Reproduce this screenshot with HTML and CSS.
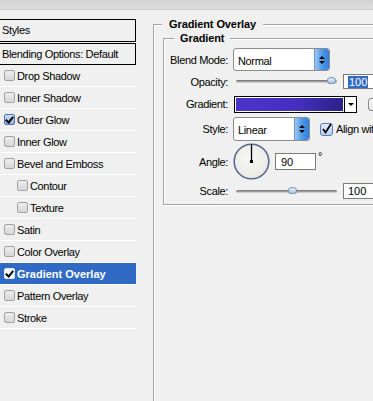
FILE: index.html
```html
<!DOCTYPE html>
<html>
<head>
<meta charset="utf-8">
<link rel="stylesheet" href="styles.css">
</head>
<body>
<div class="topbar"></div>
<div class="main">
  <div class="side">
    <div class="hdr hdr-styles">Styles</div>
    <div class="hdr hdr-blend">Blending Options: Default</div>
    <ul class="list">
      <li class="item"><span class="cb"></span>Drop Shadow</li>
      <li class="item"><span class="cb"></span>Inner Shadow</li>
      <li class="item"><span class="cb cb-on"></span>Outer Glow</li>
      <li class="item"><span class="cb"></span>Inner Glow</li>
      <li class="item"><span class="cb"></span>Bevel and Emboss</li>
      <li class="item sub"><span class="cb"></span>Contour</li>
      <li class="item sub"><span class="cb"></span>Texture</li>
      <li class="item"><span class="cb"></span>Satin</li>
      <li class="item"><span class="cb"></span>Color Overlay</li>
      <li class="item sel"><span class="cb cb-sel"></span>Gradient Overlay</li>
      <li class="item"><span class="cb"></span>Pattern Overlay</li>
      <li class="item"><span class="cb"></span>Stroke</li>
    </ul>
  </div>
  <div class="content">
    <fieldset class="group outer">
      <legend class="title title-outer">Gradient Overlay</legend>
      <fieldset class="group inner">
        <legend class="title title-inner">Gradient</legend>
        <div class="form">
          <div class="row row-blend">
            <label class="lbl">Blend Mode:</label>
            <div class="select sel-blend"><span class="sel-text">Normal</span><span class="spin"><i class="up"></i><i class="dn"></i></span></div>
          </div>
          <div class="row row-opacity">
            <label class="lbl">Opacity:</label>
            <div class="slider"><span class="thumb" style="left:96px"></span></div>
            <div class="num num-op"><span class="hl">100</span></div>
          </div>
          <div class="row row-grad">
            <label class="lbl">Gradient:</label>
            <div class="grad"><span class="grad-fill"></span></div>
            <div class="grad-arrow"><i class="tri"></i></div>
            <span class="cb2 rev"></span>
          </div>
          <div class="row row-style">
            <label class="lbl">Style:</label>
            <div class="select sel-style"><span class="sel-text">Linear</span><span class="spin"><i class="up"></i><i class="dn"></i></span></div>
            <span class="cb2 cb2-on"><svg width="13" height="13" viewBox="0 0 13 13"><path d="M3 6 L5.5 9.5 L11 1" fill="none" stroke="#000" stroke-width="1.8"/></svg></span>
            <span class="align">Align with</span>
          </div>
          <div class="row row-angle">
            <label class="lbl">Angle:</label>
            <div class="dial">
              <svg width="37" height="37" viewBox="0 0 37 37">
                <defs>
                  <radialGradient id="dg" cx="0.45" cy="0.4" r="0.7">
                    <stop offset="0" stop-color="#f6f6f3"/>
                    <stop offset="0.8" stop-color="#ebebe6"/>
                    <stop offset="1" stop-color="#d8d8d2"/>
                  </radialGradient>
                </defs>
                <circle cx="18.5" cy="18.5" r="17.3" fill="url(#dg)" stroke="#56698f" stroke-width="1.6"/>
                <line x1="18.5" y1="18.5" x2="18.5" y2="1.5" stroke="#000" stroke-width="1.3"/>
                <rect x="17" y="17" width="3" height="3" fill="#000"/>
              </svg>
            </div>
            <div class="num num-angle">90</div>
            <span class="deg">°</span>
          </div>
          <div class="row row-scale">
            <label class="lbl">Scale:</label>
            <div class="slider"><span class="thumb" style="left:57px"></span></div>
            <div class="num num-scale">100</div>
          </div>
        </div>
      </fieldset>
    </fieldset>
  </div>
</div>
</body>
</html>
```

FILE: styles.css
```css
html, body {
  margin: 0;
  padding: 0;
  background: #f0f0f0;
  overflow: hidden;
  width: 373px;
  height: 401px;
}
body {
  font-family: "Liberation Sans", Arial, sans-serif;
  font-size: 11px;
  letter-spacing: -0.35px;
  color: #000;
}
.topbar {
  height: 10px;
  background: linear-gradient(#d3d3d3, #dedede);
  border-bottom: 1px solid #cfcfcf;
  box-sizing: border-box;
}
.main {
  display: flex;
  align-items: flex-start;
}
.side {
  width: 136px;
  flex: none;
  padding-top: 9px;
}
.hdr {
  height: 21px;
  line-height: 21px;
  border-top: 1px solid #000;
  border-bottom: 1px solid #000;
  border-right: 1px solid #000;
  padding-left: 2px;
  background: #f0f0f0;
}
.hdr-blend {
  margin-top: 1px;
  height: 20px;
  line-height: 20px;
}
.list {
  list-style: none;
  margin: 0;
  padding: 0;
}
.item {
  height: 21px;
  border-bottom: 1px solid #fff;
  display: flex;
  align-items: center;
  padding-left: 4px;
  gap: 2px;
}
.item.sub {
  padding-left: 17px;
}
.item.sel {
  background: #316ac5;
  color: #fff;
  font-weight: bold;
  letter-spacing: 0;
}
.cb {
  width: 9px;
  height: 9px;
  border: 1px solid #a2a2a2;
  border-radius: 2px;
  background: linear-gradient(#ececec, #d6d6d6);
  flex: none;
  position: relative;
}
.cb-on {
  border-color: #4d73b8;
  background: linear-gradient(#cfe0f7, #8fb0e0);
}
.cb-sel {
  border-color: #dfe8f6;
  background: #fff;
}
.cb-on::after, .cb-sel::after {
  content: "";
  position: absolute;
  left: 2px;
  top: 0px;
  width: 3px;
  height: 6px;
  border-right: 2px solid #000;
  border-bottom: 2px solid #000;
  transform: rotate(40deg);
}
.content {
  flex: none;
  padding-left: 17px;
  padding-top: 8px;
}
.group {
  margin: 0;
  padding: 0;
  border: 1px solid #a3a3a3;
  box-shadow: inset 1px 1px 0 #fff, 1px 1px 0 #fff;
  min-width: 0;
}
.outer {
  width: 240px;
  height: 420px;
  box-sizing: border-box;
}
.inner {
  width: 230px;
  margin-left: 9px;
  margin-top: 1px;
  padding-bottom: 5px;
}
.title {
  font-weight: bold;
  background: #f0f0f0;
  line-height: 13px;
  letter-spacing: -0.1px;
}
.title-outer {
  margin-left: 8px;
  padding: 0 7px;
}
.title-inner {
  margin-left: 10px;
  padding: 0 6px;
}
.form {
  display: flex;
  flex-direction: column;
}
.row {
  display: flex;
  align-items: center;
}
.lbl {
  width: 64px;
  text-align: right;
  margin-right: 5px;
  flex: none;
}
.row-blend { height: 23px; margin-top: 3px; }
.row-opacity { height: 15px; margin-top: 3px; }
.row-grad { height: 16px; margin-top: 7px; }
.row-style { height: 24px; margin-top: 5px; }
.row-angle { height: 37px; margin-top: 2px; }
.row-scale { height: 16px; margin-top: 3px; }

.select {
  box-sizing: border-box;
  height: 100%;
  border: 1px solid #8c8c8c;
  border-radius: 3px;
  background: #fff;
  display: flex;
  align-items: center;
  overflow: hidden;
}
.sel-blend { width: 97px; }
.sel-style { width: 77px; }
.sel-text {
  flex: 1;
  padding-left: 4px;
  padding-top: 2px;
}
.spin {
  width: 14px;
  height: 100%;
  background: linear-gradient(to right, #9cc6f0, #4e9ae8 50%, #2f7fdb);
  border-left: 1px solid #6d95c4;
  display: flex;
  flex-direction: column;
  align-items: center;
  justify-content: center;
  gap: 2px;
  border-radius: 0 2px 2px 0;
}
.spin .up, .spin .dn {
  width: 0;
  height: 0;
  border-left: 3px solid transparent;
  border-right: 3px solid transparent;
}
.spin .up { border-bottom: 3px solid #000; }
.spin .dn { border-top: 3px solid #000; }

.slider {
  width: 101px;
  height: 3px;
  margin-left: 3px;
  background: linear-gradient(#6e6e6e, #a8a8a8 60%, #e6e6e6);
  border-radius: 2px;
  position: relative;
}
.thumb {
  position: absolute;
  top: -3px;
  width: 9px;
  height: 7px;
  margin-left: -5px;
  box-sizing: border-box;
  border: 1px solid #7c98b8;
  border-radius: 50% 50% 40% 40%;
  background: linear-gradient(#eaf2fb, #a9c5e4);
}
.num {
  box-sizing: border-box;
  height: 100%;
  border: 1px solid #7a7a7a;
  background: #fff;
  display: flex;
  align-items: center;
  padding-left: 4px;
  letter-spacing: 0;
}
.num-op {
  margin-left: 6px;
  width: 40px;
  padding-left: 4px;
}
.hl {
  background: #316ac5;
  color: #fff;
  padding: 0 1px;
}
.num-angle {
  width: 41px;
  height: 17px;
  margin-left: 5px;
  padding-left: 5px;
}
.deg {
  margin-left: 2px;
  align-self: flex-start;
  margin-top: 7px;
  font-size: 11px;
}
.num-scale {
  margin-left: 6px;
  width: 40px;
  padding-left: 4px;
}

.grad {
  box-sizing: border-box;
  width: 111px;
  height: 17px;
  border: 1px solid #000;
  background: #fff;
  padding: 1px;
  margin-left: 1px;
  display: flex;
}
.grad-fill {
  flex: 1;
  background: linear-gradient(to right, #4a33cb, #4530c2 55%, #2d2188);
}
.grad-arrow {
  box-sizing: border-box;
  width: 12px;
  height: 17px;
  border: 1px solid #000;
  border-left: none;
  background: #fff;
  display: flex;
  align-items: center;
  justify-content: center;
}
.tri {
  width: 0;
  height: 0;
  border-left: 3px solid transparent;
  border-right: 3px solid transparent;
  border-top: 3px solid #000;
}
.cb2 {
  box-sizing: border-box;
  width: 13px;
  height: 13px;
  border: 1px solid #8a8a8a;
  border-radius: 3px;
  background: linear-gradient(#fafafa, #e4e4e4);
  flex: none;
  display: block;
}
.rev {
  margin-left: 11px;
}
.cb2-on {
  margin-left: 10px;
  border-color: #5a7bb5;
  background: linear-gradient(#e4eefb, #b8cff0);
}
.cb2-on svg { display: block; margin: -1px; }
.align {
  margin-left: 3px;
  white-space: nowrap;
}
.dial {
  width: 37px;
  height: 37px;
  flex: none;
}
.dial svg { display: block; }
```
